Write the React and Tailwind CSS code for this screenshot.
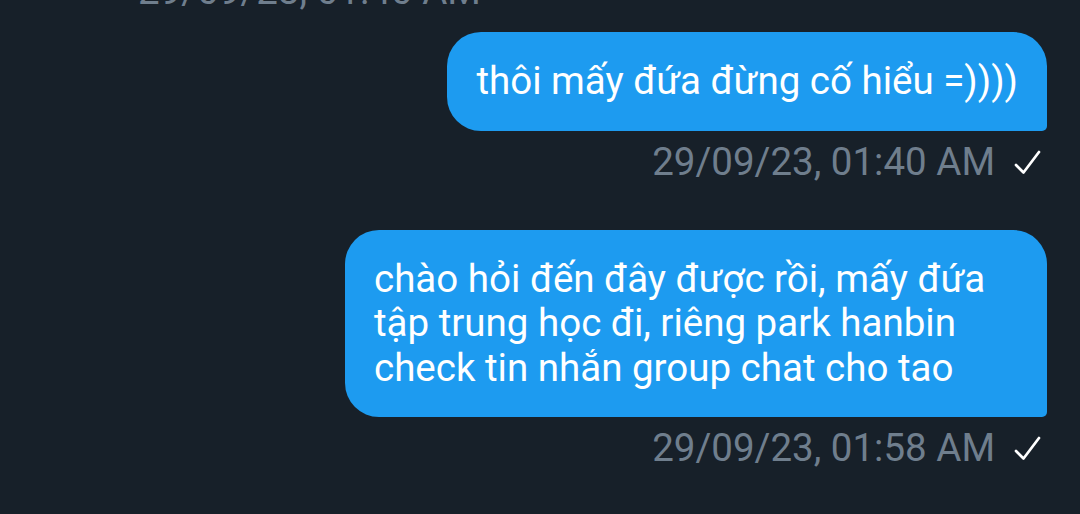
import React from "react";

const messages = [
  {
    id: 1,
    text: "thôi mấy đứa đừng cố hiểu =))))",
    time: "29/09/23, 01:40 AM",
  },
  {
    id: 2,
    text: "chào hỏi đến đây được rồi, mấy đứa tập trung học đi, riêng park hanbin check tin nhắn group chat cho tao",
    time: "29/09/23, 01:58 AM",
  },
];

function Check() {
  return (
    <svg width="27" height="26" viewBox="0 0 27 26" className="ml-[19px] shrink-0">
      <polyline
        points="2,16 9.5,23.5 25,3"
        fill="none"
        stroke="#ffffff"
        strokeWidth="2.7"
        strokeLinecap="round"
        strokeLinejoin="round"
      />
    </svg>
  );
}

export default function App() {
  return (
    <div
      className="w-[1080px] h-[514px] overflow-hidden bg-[#172029] text-[38.5px]"
      style={{ fontFamily: "Roboto, 'Noto Sans', sans-serif" }}
    >
      {/* previous message timestamp, cut off */}
      <div className="-mt-[31px] pl-[138px] leading-[44px] text-[#6f7e8d]">
        29/09/23, 01:40 AM
      </div>

      <div className="flex flex-col items-end pr-[33px] mt-[19px]">
        {messages.map((m, i) => (
          <div key={m.id} className={`flex flex-col items-end max-w-[702px] ${i > 0 ? "mt-[46px]" : ""}`}>
            <div className="bg-[#1d9bf0] text-white rounded-[34px] rounded-br-[5px] px-[29px] py-[27px] leading-[44.5px]">
              {m.text}
            </div>
            <div className="flex items-center mt-[9px] pr-[6px] leading-[44px] text-[#6f7e8d] whitespace-nowrap">
              <span>{m.time}</span>
              <Check />
            </div>
          </div>
        ))}
      </div>
    </div>
  );
}
